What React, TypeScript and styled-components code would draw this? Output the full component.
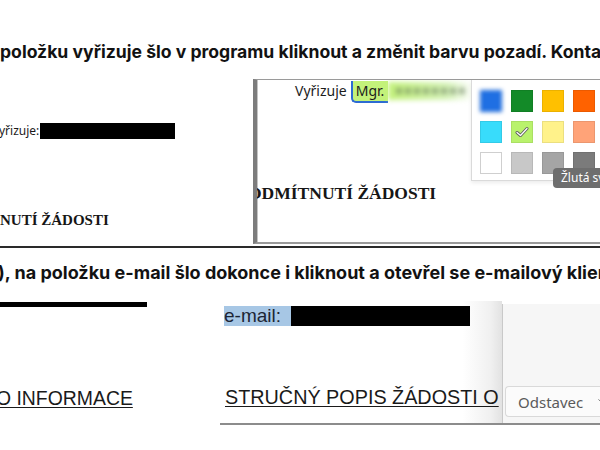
import styled, { createGlobalStyle } from 'styled-components';
import { ChevronDown } from 'lucide-react';

const GlobalStyle = createGlobalStyle`
  html, body {
    margin: 0;
    padding: 0;
    background: #ffffff;
  }

  #root {
    width: 600px;
    height: 450px;
    overflow: hidden;
  }
`;

const swatches = [
  '#1f6fe3', '#138a28', '#ffc000', '#ff6200',
  '#38dcfb', '#b9f26c', '#fff28a', '#ffa378',
  '#ffffff', '#c8c8c8', '#a5a5a5', '#7b7b7b',
];

function App() {
  return (
    <Page>
      <GlobalStyle />

      <Heading $size={17.6}>položku vyřizuje šlo v programu kliknout a změnit barvu pozadí. Kontakty</Heading>
      <ShotRow>
        <PlainShot>
          <FieldLine>
            <SmallLabel>yřizuje:</SmallLabel>
            <Redacted $width={135} $height={16} />
          </FieldLine>
          <SerifTitle $size={15} $top={71}>NUTÍ ŽÁDOSTI</SerifTitle>
        </PlainShot>

        <EditorShot>
          <HandlerLine>
            <HandlerLabel>Vyřizuje</HandlerLabel>
            <Chip>Mgr.</Chip>
            <BlurredName />
          </HandlerLine>
          <SerifTitle $size={17.5} $top={80} $shift={-9}>ODMÍTNUTÍ ŽÁDOSTI</SerifTitle>

          <Palette>
            {swatches.map((color, i) => (
              <Swatch key={color + i} $color={color} $blurred={i === 0}>
                {i === 5 && (
                  <svg width="14" height="12" viewBox="0 0 14 12">
                    <path d="M2 6.5 L5.5 9.5 L12 2.5" fill="none" stroke="#5a5a5a" strokeWidth="3" strokeLinecap="round" strokeLinejoin="round" />
                    <path d="M2 6.5 L5.5 9.5 L12 2.5" fill="none" stroke="#ffffff" strokeWidth="1.3" strokeLinecap="round" strokeLinejoin="round" />
                  </svg>
                )}
              </Swatch>
            ))}
          </Palette>
          <Tooltip>Žlutá světlá</Tooltip>
        </EditorShot>
      </ShotRow>

      <Rule />

      <Heading $size={18} $top={15} $shift={-2}>), na položku e-mail šlo dokonce i kliknout a otevřel se e-mailový klient</Heading>
      <ShotRow>
        <PlainShot $width={220}>
          <ThickBar />
          <UnderTitle $size={19.4} $top={80} $shift={-4}>O INFORMACE</UnderTitle>
        </PlainShot>

        <BrowserShot>
          <DocColumn>
            <MailLine>
              <Selected>e-mail:</Selected>
              <Redacted $width={179} $height={20} />
            </MailLine>
            <UnderTitle $size={19.8} $top={60} $shift={5}>STRUČNÝ POPIS ŽÁDOSTI O</UnderTitle>
          </DocColumn>
          <SideColumn>
            <Dropdown>
              <span>Odstavec</span>
              <ChevronDown size={15} strokeWidth={1.4} color="#6a6a6a" />
            </Dropdown>
          </SideColumn>
        </BrowserShot>
      </ShotRow>
    </Page>
  );
}

export default App;

const Page = styled.div`
  display: flex;
  flex-direction: column;
  width: 600px;
  height: 450px;
  overflow: hidden;
  background: #ffffff;
`;

const Heading = styled.h2<{ $size: number; $top?: number; $shift?: number }>`
  margin: ${(p) => p.$top ?? 42}px 0 0 ${(p) => p.$shift ?? 0}px;
  font-family: Inter, Roboto, "Noto Sans", sans-serif;
  font-weight: 700;
  font-size: ${(p) => p.$size}px;
  line-height: 20px;
  color: #121212;
  white-space: nowrap;
`;

const ShotRow = styled.div`
  display: flex;
  align-items: stretch;
`;

const PlainShot = styled.div<{ $width?: number }>`
  display: flex;
  flex-direction: column;
  width: ${(p) => p.$width ?? 253}px;
  flex-shrink: 0;
  overflow: hidden;
`;

const FieldLine = styled.div`
  display: flex;
  align-items: center;
  gap: 1px;
  margin-top: 61px;
  height: 16px;
`;

const SmallLabel = styled.span`
  font-family: "Noto Sans", sans-serif;
  font-size: 12px;
  line-height: 16px;
  color: #1a1a1a;
  margin-left: -1px;
`;

const Redacted = styled.span<{ $width: number; $height: number }>`
  display: block;
  width: ${(p) => p.$width}px;
  height: ${(p) => p.$height}px;
  background: #000000;
`;

const SerifTitle = styled.div<{ $size: number; $top: number; $shift?: number }>`
  margin: ${(p) => p.$top}px 0 0 ${(p) => p.$shift ?? 0}px;
  font-family: "Liberation Serif", "Times New Roman", serif;
  font-weight: 700;
  font-size: ${(p) => p.$size}px;
  line-height: 20px;
  color: #161616;
  white-space: nowrap;
`;

const EditorShot = styled.div`
  position: relative;
  flex: 1;
  height: 165px;
  margin-top: 17px;
  border-top: 1px solid #9a9a9a;
  border-bottom: 2px solid #9a9a9a;
  border-left: 4px solid #7c7c7c;
  box-shadow: inset 1px 0 0 #c4c4c4;
  overflow: hidden;
  box-sizing: border-box;
`;

const HandlerLine = styled.div`
  display: flex;
  align-items: flex-start;
  margin: 1px 0 0 38px;
  height: 22px;
`;

const HandlerLabel = styled.span`
  font-family: "Noto Sans", sans-serif;
  font-size: 14px;
  line-height: 20px;
  color: #1c1c1c;
  margin-right: 4px;
`;

const Chip = styled.span`
  font-family: "Noto Sans", sans-serif;
  font-size: 14px;
  line-height: 20px;
  color: #1c1c1c;
  background: #c3f27a;
  padding: 0 4px 0 3px;
  border-left: 2px solid #2d6bd2;
  border-bottom: 2px solid #2d6bd2;
  border-bottom-left-radius: 5px;
`;

const BlurredName = styled.span`
  display: block;
  width: 86px;
  height: 18px;
  margin-top: 1px;
  background:
    repeating-linear-gradient(90deg, rgba(90, 110, 80, 0.55) 0 6px, transparent 6px 9px) 8px 6px / 70px 6px no-repeat,
    linear-gradient(90deg, #c3f27a, #d6f3b8 70%, rgba(255, 255, 255, 0));
  filter: blur(2.5px);
`;

const Palette = styled.div`
  position: absolute;
  left: 214px;
  top: 0;
  width: 140px;
  height: 101px;
  box-sizing: border-box;
  display: grid;
  grid-template-columns: repeat(4, 22px);
  grid-auto-rows: 22px;
  gap: 9px;
  padding: 10px 0 0 8px;
  background: #ffffff;
  border-left: 1px solid #dadada;
  border-bottom: 1px solid #dadada;
  box-shadow: 0 2px 4px rgba(0, 0, 0, 0.08);
`;

const Swatch = styled.span<{ $color: string; $blurred?: boolean }>`
  display: flex;
  align-items: center;
  justify-content: center;
  background: ${(p) => p.$color};
  border: 1px solid ${(p) => (p.$color === '#ffffff' ? '#cfcfcf' : 'rgba(0, 0, 0, 0.08)')};
  box-sizing: border-box;
  filter: ${(p) => (p.$blurred ? 'blur(2px)' : 'none')};
`;

const Tooltip = styled.div`
  position: absolute;
  left: 296px;
  top: 88px;
  padding: 0 8px;
  height: 20px;
  line-height: 20px;
  border-radius: 4px;
  background: #6e6e6e;
  color: #ffffff;
  font-family: "Noto Sans", sans-serif;
  font-size: 12px;
  white-space: nowrap;
`;

const Rule = styled.div`
  height: 2px;
  margin-top: 2px;
  background: #2a2a2a;
`;

const ThickBar = styled.span`
  display: block;
  width: 147px;
  height: 5px;
  margin-top: 19px;
  background: #000000;
`;

const UnderTitle = styled.div<{ $size: number; $top: number; $shift?: number }>`
  margin: ${(p) => p.$top}px 0 0 ${(p) => p.$shift ?? 0}px;
  font-family: "Liberation Sans", Arial, sans-serif;
  font-size: ${(p) => p.$size}px;
  line-height: 22px;
  color: #1a1a1a;
  text-decoration: underline;
  text-decoration-thickness: 1px;
  text-underline-offset: 2px;
  white-space: nowrap;
`;

const BrowserShot = styled.div`
  display: flex;
  flex: 1;
  height: 124px;
  margin-top: 18px;
  border-bottom: 2px solid #8c8c8c;
  box-sizing: border-box;
`;

const DocColumn = styled.div`
  display: flex;
  flex-direction: column;
  width: 282px;
  flex-shrink: 0;
  overflow: hidden;
  background: linear-gradient(90deg, #ffffff 86%, #f0f0f0 96%, #e2e2e2);
`;

const MailLine = styled.div`
  display: flex;
  align-items: center;
  margin: 5px 0 0 4px;
  height: 20px;
`;

const Selected = styled.span`
  font-family: "Liberation Sans", Arial, sans-serif;
  font-size: 19px;
  line-height: 20px;
  color: #1c2534;
  background: #a7c7e5;
  padding-right: 10px;
`;

const SideColumn = styled.div`
  flex: 1;
  margin-top: 3px;
  padding: 82px 0 0 2px;
  background: #f6f6f6;
  border-left: 1px solid #c9c9c9;
`;

const Dropdown = styled.div`
  display: flex;
  align-items: center;
  gap: 12px;
  height: 31px;
  padding-left: 12px;
  box-sizing: border-box;
  border: 1px solid #d9d9d9;
  border-right: none;
  border-radius: 4px 0 0 4px;
  background: #fbfbfb;
  font-family: "Noto Sans", sans-serif;
  font-size: 15px;
  color: #5a5a5a;
  white-space: nowrap;
`;
